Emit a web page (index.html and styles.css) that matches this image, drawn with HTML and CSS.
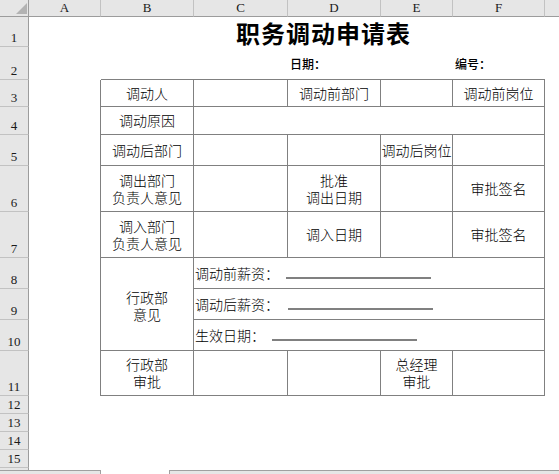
FILE: index.html
```html
<!DOCTYPE html>
<html lang="zh">
<head>
<meta charset="utf-8">
<title>职务调动申请表</title>
<link rel="stylesheet" href="styles.css">
</head>
<body>
<div class="sheet">
  <div class="corner"><svg width="11" height="11" viewBox="0 0 11 11"><polygon points="11,0 11,11 0,11" fill="#b3b3b3"/></svg></div>
  <div class="ch">A</div>
  <div class="ch">B</div>
  <div class="ch">C</div>
  <div class="ch">D</div>
  <div class="ch">E</div>
  <div class="ch">F</div>
  <div class="ch ch-last"></div>

  <div class="rh">1</div>
  <div class="blank span-r2"></div>
  <div class="title span-c5">职务调动申请表</div>
  <div class="blank span-r16"></div>

  <div class="rh">2</div>
  <div class="meta"></div>
  <div class="meta"></div>
  <div class="meta">日期：</div>
  <div class="meta"></div>
  <div class="meta">编号：</div>

  <div class="rh">3</div>
  <div class="edge span-r9"></div>
  <div class="c">调动人</div>
  <div class="c"></div>
  <div class="c">调动前部门</div>
  <div class="c"></div>
  <div class="c">调动前岗位</div>

  <div class="rh">4</div>
  <div class="c">调动原因</div>
  <div class="c span-c4"></div>

  <div class="rh">5</div>
  <div class="c">调动后部门</div>
  <div class="c"></div>
  <div class="c"></div>
  <div class="c">调动后岗位</div>
  <div class="c"></div>

  <div class="rh">6</div>
  <div class="c">调出部门<br>负责人意见</div>
  <div class="c"></div>
  <div class="c">批准<br>调出日期</div>
  <div class="c"></div>
  <div class="c">审批签名</div>

  <div class="rh">7</div>
  <div class="c">调入部门<br>负责人意见</div>
  <div class="c"></div>
  <div class="c">调入日期</div>
  <div class="c"></div>
  <div class="c">审批签名</div>

  <div class="rh">8</div>
  <div class="c span-r3 shift">行政部<br>意见</div>
  <div class="c left span-c4">调动前薪资：<span class="line"></span></div>

  <div class="rh">9</div>
  <div class="c left span-c4">调动后薪资：<span class="line line-b"></span></div>

  <div class="rh">10</div>
  <div class="c left span-c4">生效日期：<span class="line"></span></div>

  <div class="rh">11</div>
  <div class="c">行政部<br>审批</div>
  <div class="c"></div>
  <div class="c"></div>
  <div class="c">总经理<br>审批</div>
  <div class="c"></div>

  <div class="rh">12</div>
  <div class="blank span-c6r5"></div>
  <div class="rh">13</div>
  <div class="rh">14</div>
  <div class="rh">15</div>
  <div class="rh"></div>
</div>
<div class="tabs">
  <div class="tab"></div>
  <div class="tab-active"></div>
  <div class="tab-rest"></div>
</div>
</body>
</html>
```
FILE: styles.css
```css
html, body {
  margin: 0;
  padding: 0;
  background: #fff;
}
body {
  width: 559px;
  height: 474px;
  overflow: hidden;
  font-family: "Noto Sans CJK SC", "Noto Sans", sans-serif;
  color: #000;
}
.sheet {
  display: grid;
  grid-template-columns: 29px 72px 93px 94px 93px 72px 92px 1fr;
  grid-template-rows: 17px 30px 33px 27px 28px 31px 46px 46px 31px 31px 31px 45px 18px 18px 18px 18px 18px;
  height: 470px;
  overflow: hidden;
}
.corner {
  background: #e6e6e6;
  border-right: 1px solid #9c9c9c;
  border-bottom: 1px solid #9c9c9c;
  display: flex;
  justify-content: flex-end;
  align-items: flex-end;
  padding: 0 1px 2px 0;
}
.ch {
  background: #e6e6e6;
  border-right: 1px solid #c2c2c2;
  border-bottom: 1px solid #9c9c9c;
  display: flex;
  align-items: center;
  justify-content: center;
  font-family: "Liberation Serif", serif;
  font-size: 13px;
  line-height: 14px;
  color: #1a1a1a;
}
.ch-last {
  border-right: none;
}
.rh {
  grid-column: 1;
  background: #e6e6e6;
  border-right: 1px solid #9c9c9c;
  border-bottom: 1px solid #c2c2c2;
  display: flex;
  align-items: flex-end;
  justify-content: center;
  font-family: "Liberation Serif", serif;
  font-size: 13px;
  line-height: 14px;
  padding-bottom: 1px;
  color: #1a1a1a;
}
.blank {
  background: #fff;
}
.span-r2 { grid-row: span 2; }
.span-r3 { grid-row: span 3; }
.span-r9 { grid-row: span 9; }
.span-r16 { grid-row: span 16; }
.span-c4 { grid-column: span 4; }
.span-c5 { grid-column: span 5; }
.span-c6r5 { grid-column: span 6; grid-row: span 5; }

.title {
  display: flex;
  align-items: center;
  justify-content: center;
  font-size: 24px;
  font-weight: bold;
  letter-spacing: 1px;
  padding-left: 1px;
}
.meta {
  border-bottom: 1px solid #808080;
  display: flex;
  align-items: center;
  padding-left: 2px;
  font-size: 12px;
  font-weight: 500;
}
.edge {
  border-right: 1px solid #808080;
}
.c {
  border-right: 1px solid #808080;
  border-bottom: 1px solid #808080;
  display: flex;
  align-items: center;
  justify-content: center;
  text-align: center;
  font-size: 14px;
  font-weight: 300;
  line-height: 17px;
}
.shift {
  padding-top: 4px;
}
.left {
  justify-content: flex-start;
  padding-left: 1px;
}
.line {
  display: inline-block;
  width: 145px;
  height: 0;
  margin-left: 7px;
  margin-top: 9px;
  border-bottom: 2px solid #808080;
}
.line-b {
  margin-left: 9px;
}
.tabs {
  display: flex;
  height: 4px;
}
.tab {
  width: 100px;
  background: #e6e6e6;
  border-top: 1px solid #a0a0a0;
  border-right: 1px solid #a0a0a0;
}
.tab-active {
  width: 68px;
  background: #fff;
}
.tab-rest {
  flex: 1;
  background: #e6e6e6;
  border-top: 1px solid #a0a0a0;
  border-left: 1px solid #a0a0a0;
}
```
